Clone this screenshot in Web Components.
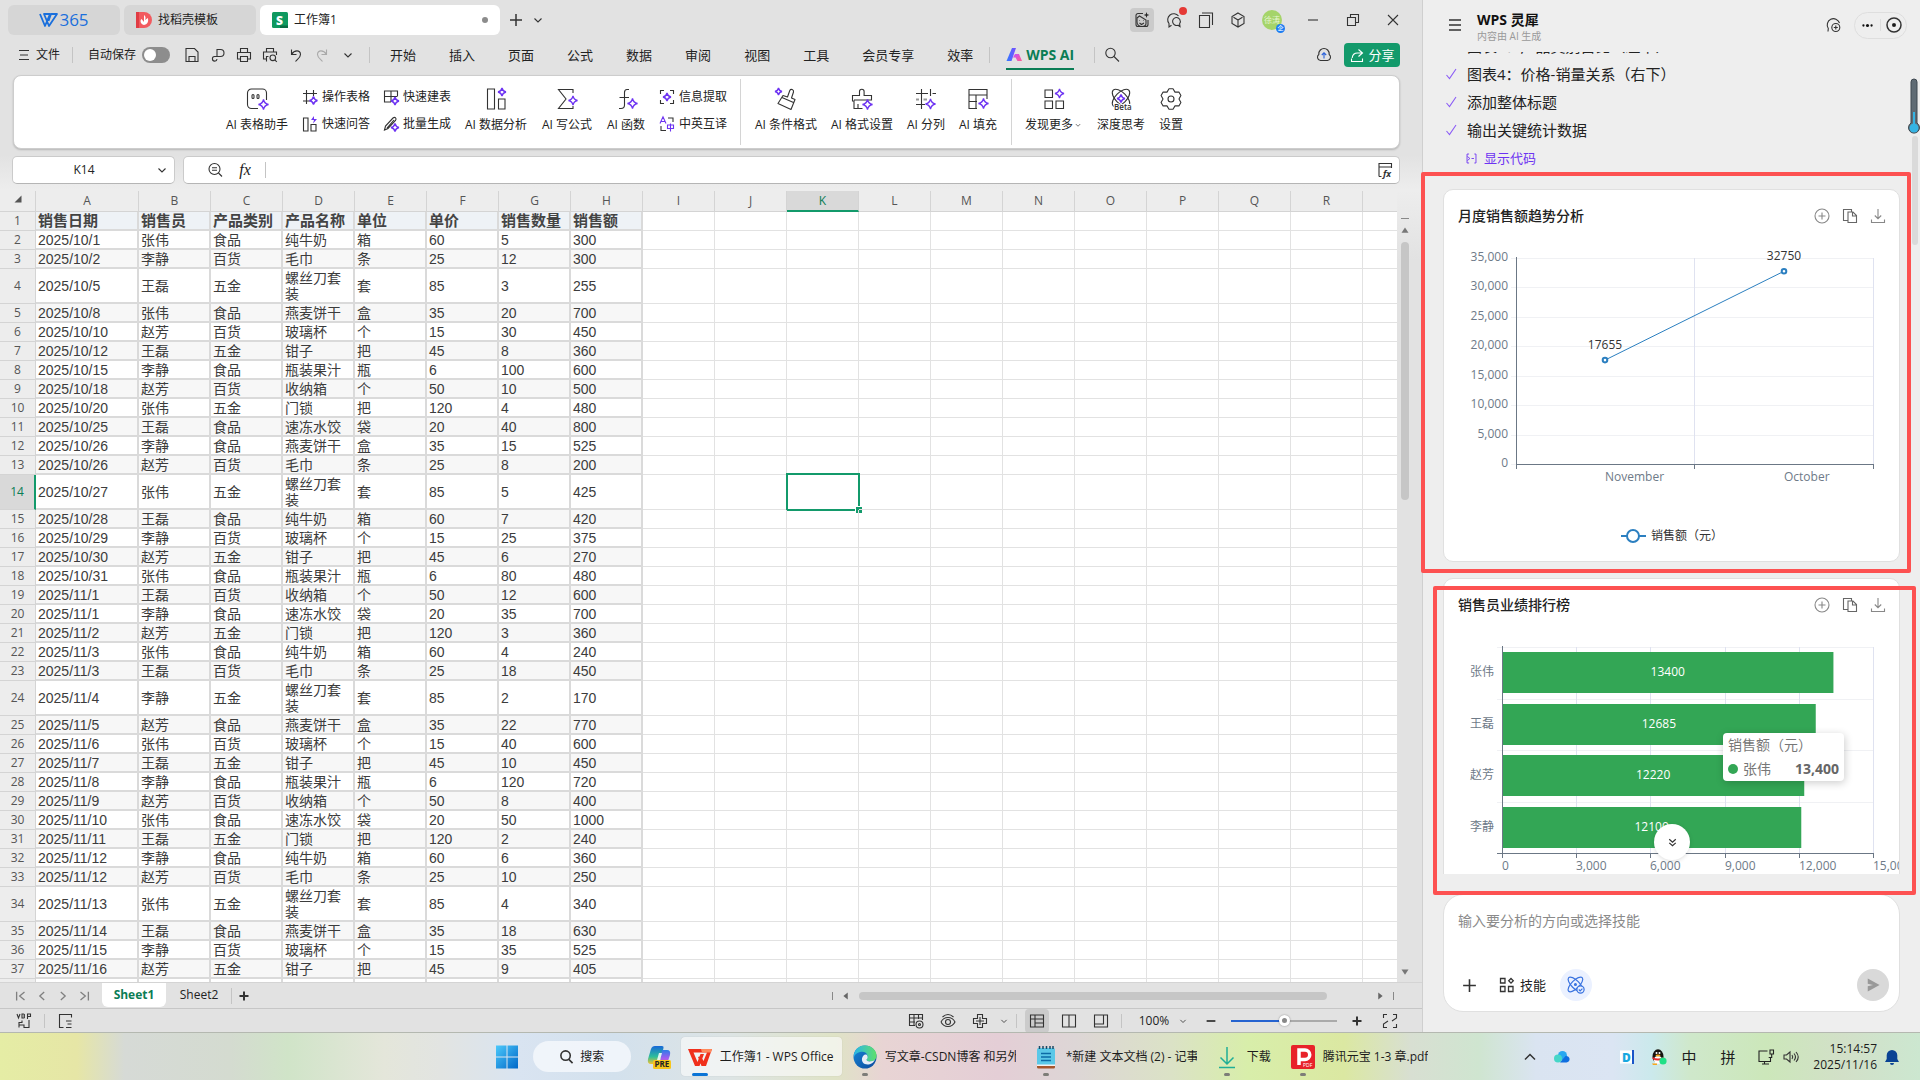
<!DOCTYPE html>
<html lang="zh-CN">
<head>
<meta charset="utf-8">
<title>工作簿1 - WPS Office</title>
<style>
html,body{margin:0;height:100%}
body{font-family:"Open Sans","Noto Sans CJK SC",sans-serif;font-size:12px;line-height:16px;color:#222;overflow:hidden}
</style>
</head>
<body>
<desk-top></desk-top>
<script>
const SPARK = (x, y, r) => `<path d="M${x} ${y - r}Q${x + r * .18} ${y - r * .18} ${x + r} ${y}Q${x + r * .18} ${y + r * .18} ${x} ${y + r}Q${x - r * .18} ${y + r * .18} ${x - r} ${y}Q${x - r * .18} ${y - r * .18} ${x} ${y - r}Z" fill="#fff" stroke="#6d33f2" stroke-width="1.3"/>`;

/* six-toothed outline centred on 12,12 */
const GEAR = Array.from({ length: 6 }, (_, k) => [[-11, 10.5], [11, 10.5], [30, 8]].map(([d, r]) => {
  const a = (k * 60 - 90 + d) * Math.PI / 180;
  return (12 + r * Math.cos(a)).toFixed(1) + ' ' + (12 + r * Math.sin(a)).toFixed(1);
}).join('L')).join('L');

/* name: [viewBox size, markup] */
const ICONS = {
  menu: [16, '<path d="M3 3.500h10M4 8h8M3 12.500h10"/>'],
  menuWide: [16, '<path d="M2 3h12M2 8h12M2 13h12" stroke-width="1.300"/>'],
  chevron: [16, '<path d="M4.500 6.500L8 10l3.500-3.500"/>'],
  chevronUp: [16, '<path d="M3 10.500L8 5.500l5 5" stroke-width="1.500"/>'],
  plus: [16, '<path d="M8 2v12M2 8h12" stroke-width="1.500"/>'],
  plusBold: [16, '<path d="M8 3.500v9M3.500 8h9" stroke-width="2"/>'],
  minusBold: [16, '<path d="M3 8h10" stroke-width="2"/>'],
  save: [16, '<path d="M2 1.500h8.500L14 5v9.500H2zM5 14.500V9.500h6v5"/>'],
  swirl: [16, '<path d="M7 9.500V2.500h3.500a3.500 3.500 0 0 1 0 7H4.500a2.300 2.300 0 1 0 2.500 2.500"/>'],
  print: [16, '<path d="M4.500 5.500V1.500h7v4M4 12H1.500V5.500h13V12H12M4.500 9.500h7v5h-7z"/>'],
  preview: [16, '<path d="M4.500 5V1.500h7V5M4 12H1.500V5h13v3M4.500 14.500v-5h2M14.800 14.800l-2-2"/><circle cx="10.800" cy="10.800" r="2.800"/>'],
  undo: [16, '<path d="M3.500 2.500v5h5M3.800 7.200C6 3 12.500 2.500 12.500 7.500c0 3-3 4.500-5 7"/>'],
  redo: [16, '<path d="M12.500 2.500v5h-5M12.200 7.200C10 3 3.500 2.500 3.500 7.500c0 3 3 4.500 5 7" stroke="#aaa"/>'],
  search: [16, '<circle cx="6.500" cy="6" r="4.700"/><path d="M10 9.500l5 5"/>'],
  zoomOut: [16, '<circle cx="7.500" cy="7" r="5.500"/><path d="M5 5.800h5M5 8.300h5M11.500 11l3.500 3.500"/>'],
  cloudUp: [16, '<path d="M4.500 13.500C1 13 .7 9 2.800 7.500 2.500 3.500 5.500 1.500 8 1.500s5.500 2 5.200 6c2.100 1.500 1.800 5.500-1.700 6z"/><path d="M8 11.500V6M5.800 8L8 5.800 10.200 8" stroke="#2b62d9"/>'],
  share: [16, '<path d="M9.500 2.500L13.500 6l-4 3.500M13 6H8.500C5 6 3.500 8 3.200 11M2.500 11.500v3h11v-3" stroke="#fff"/>'],
  xiu: [16, '<path d="M9 1.500H4a2 2 0 0 0-2 2v9a2 2 0 0 0 2 2h8a2 2 0 0 0 2-2V8"/><path d="M3 6l2.500-2L12 8v3.500c0 2-1.500 3-4 3S3 13 3 10zM5.500 11l2 1.500L10 11M5.500 8.500h.5M9.500 8.500h.5"/><path d="M12.500 0l.7 2.200 2.200.8-2.200.8-.7 2.200-.7-2.200L9.600 3l2.200-.8z" fill="#222" stroke="none"/>'],
  chat: [18, '<path d="M6.500 14.200L4 16v-3.500A6 6 0 1 1 13.500 5"/><path d="M11 6.500a4 4 0 1 0 2 7.700l2 1.300-.4-2.700A4 4 0 0 0 11 6.500z"/>'],
  copyTab: [16, '<path d="M1.500 3.500h10v12h-10zM4 1h10.500v12"/>'],
  cube: [16, '<path d="M8 1l6 3.500v7L8 15l-6-3.500v-7zM8 8v6.500M8 8L3.500 5.200M8 8l4.500-2.800"/>'],
  min: [16, '<path d="M3 8h10"/>'],
  restore: [16, '<path d="M2.500 5.500h8v8h-8zM5.500 5.500v-3h8v8h-3"/>'],
  close: [16, '<path d="M3 3l10 10M13 3L3 13"/>'],
  fxPanel: [16, '<path d="M2 14.500V1.500h12.500V6M2 5h12.500M2 14.500h2.500"/><text x="6" y="14.500" font-size="9" font-style="italic" font-weight="700" fill="#333" stroke="none">fx</text>'],
  robot: [24, '<path d="M13 21.500H6.500a4 4 0 0 1-4-4V6a4 4 0 0 1 4-4h11a4 4 0 0 1 4 4v7"/><rect x="7" y="7.500" width="2" height="4" rx="1"/><rect x="12" y="7.500" width="2" height="4" rx="1"/>' + SPARK(18.5, 17.5, 5)],
  gridOp: [16, '<path d="M4.500 1v14M11.500 1v6M1 4.500h14M1 12h7"/>' + SPARK(11.5, 11.5, 4)],
  bolt: [16, '<path d="M1.500 2h4.500v13H1.500zM9 8.500h5v6.500H9z"/><path d="M12 0L9 4h3l-1 3.500 4-4.500h-3z" fill="#6d33f2" stroke="none"/>'],
  tableNew: [16, '<path d="M8 13H1.500V2h13v5M1.500 7.500h13M8 2v11"/>' + SPARK(12, 12, 4)],
  pen: [16, '<path d="M1.500 14l1-4L10 2c2-1.500 4 .5 2.500 2.500l-7.500 8zM4 12l7-8"/>' + SPARK(12, 11.500, 4)],
  chart: [24, '<path d="M3.500 2h7v20h-7zM14.500 12h6.500v10h-6.500z"/>' + SPARK(18, 5, 4)],
  sigma: [24, '<path d="M18 6V2.500H3.500L11 12l-7.500 9.500H18V19"/>' + SPARK(18, 13.500, 4.5)],
  func: [24, '<path d="M15 2.500h-2q-2.500 0-2.500 3v12.500q0 3.500-3.500 3.500H5M5.500 10.500H15"/>' + SPARK(18.500, 16.500, 5)],
  extract: [16, '<path d="M1.500 5V1.500H5M11 1.500h3.500V5M14.500 11v3.500H11M5 14.500H1.500V11"/>' + SPARK(8, 8, 4)],
  translate: [16, '<path d="M9 2h5v4M2 10v4.500h5"/><g stroke="#6d33f2"><path d="M1 7.500L4 .8l3 6.700M2.200 5.500h3.600M8.500 9h6v3.500h-6zM11.500 7.500V15.500"/></g>'],
  brush: [24, '<path d="M9 8.500l4.500 1.500 2.300-6.500c1-2 4.200-1 3.700 1.500L17.500 11l3.500 1.500-4 10-13-6z M8 10.500l11.500 5" stroke-linejoin="round"/>' + SPARK(4.500, 4.500, 3.500)],
  format: [24, '<path d="M12.500 21.500H4v-7.500H2.500V8.500h7v-4a2.300 2.300 0 0 1 4.600 0v4H21.500V13H4M8 17v4"/>' + SPARK(17.500, 17.500, 5)],
  split: [24, '<path d="M7.500 2v20M16.500 2v7M2 6.500h12M18.500 6.500H22M2 17.500h9"/><path d="M2 12.500h3M9.500 12.500H13" stroke="#999" stroke-width="1.800"/>' + SPARK(16.500, 17, 5)],
  fill: [24, '<path d="M11 21.500H3V2.500h18V12M3 8h18M3 14.500h8M10 8v13.500"/>' + SPARK(17.500, 16.500, 5)],
  more: [24, '<path d="M3 3h7.500v7.500H3zM3 14h7.500v7.500H3zM14 14h7.500v7.500H14z"/>' + SPARK(17.500, 6.500, 4.5)],
  atom: [24, '<ellipse cx="12" cy="11" rx="5.500" ry="11" transform="rotate(45 12 11)"/><ellipse cx="12" cy="11" rx="5.500" ry="11" transform="rotate(-45 12 11)"/>' + SPARK(12, 11.500, 4) + '<text x="5" y="22.500" font-size="8" font-weight="600" fill="#333" stroke="#fff" stroke-width="2" paint-order="stroke">Beta</text>'],
  gear: [24, `<path d="M${GEAR}Z" stroke-linejoin="round"/><circle cx="12" cy="12" r="3"/>`],
  first: [16, '<path d="M3 3v10M12 3.500L6.500 8l5.500 4.500" stroke="#808080" stroke-width="1.500"/>'],
  prev: [16, '<path d="M10.500 3.500L5.500 8l5 4.500" stroke="#808080" stroke-width="1.500"/>'],
  next: [16, '<path d="M5.500 3.500l5 4.500-5 4.500" stroke="#808080" stroke-width="1.500"/>'],
  last: [16, '<path d="M13 3v10M4 3.500L9.500 8 4 12.500" stroke="#808080" stroke-width="1.500"/>'],
  macro: [16, '<path d="M1 1l1.500 4L4 1M6 1v4h1.500a1 1 0 0 0 0-2 1 1 0 0 0 0-2zM11.500 6V1h3v2.500h-3M3 14.500V9.500h3v-2M3 12h5v2.500h5V7"/>'],
  outline: [16, '<path d="M14.500 4.500V1.500h-12v13h4M9 8h5.500M10.500 11h4M9 14.500h5.500"/>'],
  tableEye: [16, '<path d="M7 12.500H1.500v-11h13V7M1.500 5h13M1.500 9H7M6 1.500v11M10.500 1.500V6"/><circle cx="11.500" cy="11.500" r="3.500"/><circle cx="11.500" cy="11.500" r="1"/>'],
  eye: [16, '<path d="M1 9c3-6 11-6 14 0-3 6-11 6-14 0M2.500 4C6 .8 10 .8 13.500 4"/><circle cx="8" cy="9" r="2.500"/>'],
  cross: [16, '<path d="M5.500 5.500v-4h5v4h4v5h-4v4h-5v-4h-4v-5zM8 4v8M4 8h8"/>'],
  viewGrid: [16, '<path d="M1.500 2h13v12h-13zM1.500 6h13M6 2v12M6 10h8.500"/>'],
  viewBook: [16, '<path d="M1.500 2h13v12h-13zM8 2v12"/>'],
  viewPage: [16, '<path d="M1.500 2h13v12h-13zM1.500 11h9V2"/>'],
  full: [16, '<path d="M1.500 5V1.500H5M14.500 11v3.500H11M11 1.500h3.500V5L10 8M5 14.500H1.500V11L6 8"/>'],
  chatAdd: [16, '<path d="M3 14.500l.3-3A6.300 6.300 0 1 1 14.500 6"/><circle cx="10.800" cy="10.500" r="4"/><path d="M10.800 8.500v4M8.800 10.500h4"/>'],
  dots: [16, '<g fill="#111" stroke="none"><circle cx="3" cy="8" r="1.400"/><circle cx="8" cy="8" r="1.900"/><circle cx="13" cy="8" r="1.400"/></g>'],
  target: [16, '<circle cx="8" cy="8" r="7" stroke-width="1.500"/><circle cx="8" cy="8" r="1.500" fill="#111"/>'],
  check: [16, '<path d="M3.500 9l3 3.500 6.500-9.500" stroke="#8b5cf6"/>'],
  code: [16, '<path d="M5 2.500H2.500v11H5M3 5.500L6 8l-3 2.500M8 8h3M11.500 2.500h2v11h-2" stroke="#6d33f2"/>'],
  addCircle: [16, '<circle cx="8" cy="8" r="7" stroke="#888"/><path d="M8 4.500v7M4.500 8h7" stroke="#888"/>'],
  copy: [16, '<path d="M6 12.500H1.500v-11h8v2.500M6 4h5l3.500 3.500v7H6zM10.500 4v4h4" stroke="#666"/>'],
  download: [16, '<path d="M8 1v9.500M4.800 7.500L8 10.700l3.200-3.200M1.500 11.500v3h13v-3" stroke="#888"/>'],
  dblDown: [16, '<path d="M4 4l4 3.500L12 4M4 8.500L8 12l4-3.500" stroke-width="1.500"/>'],
  skills: [16, '<path d="M1.500 1.500h4.500v4.500H1.500zM1.500 9.500h4.500v5H1.500zM9.500 9.500h4.500v5H9.500zM12 1.500l2.300 2.300L12 6.100 9.700 3.800z" stroke-width="1.300"/>'],
  science: [16, '<g stroke="#3b74e0"><ellipse cx="7.500" cy="7.500" rx="3.500" ry="8.500" transform="rotate(45 7.500 7.500)"/><ellipse cx="7.500" cy="7.500" rx="3.500" ry="8.500" transform="rotate(-45 7.500 7.500)"/><circle cx="7.500" cy="7.500" r=".8" fill="#3b74e0"/><circle cx="12" cy="12" r="3.200" fill="#ebf1ff"/><path d="M10.500 12l1.200 1.200 2-2"/></g>'],
  send: [16, '<path d="M2 .5L15.500 8 2 15.500V9.500L8 8 2 6.500z" fill="#999" stroke="none"/>'],
  winSearch: [16, '<circle cx="7" cy="7" r="5" stroke-width="1.700"/><path d="M10.500 11l4 4" stroke-width="1.700"/>'],
  windows: [24, '<defs><linearGradient id="w" x1="0" y1="0" x2="1" y2="1"><stop stop-color="#4cc9fb"/><stop offset="1" stop-color="#0067c8"/></linearGradient></defs><path fill="url(#w)" stroke="none" d="M1 .5h10.500v11H1zM12.500.5H23v11H12.500zM1 12.500h10.500v11H1zM12.500 12.500H23v11H12.500z"/>'],
  copilot: [24, '<defs><linearGradient id="c1" x1="0" y1="0" x2="0" y2="1"><stop stop-color="#1668d8"/><stop offset=".6" stop-color="#2fbf9a"/><stop offset="1" stop-color="#f2c230"/></linearGradient><linearGradient id="c2" x1="0" y1="0" x2="0" y2="1"><stop stop-color="#2a7de8"/><stop offset=".5" stop-color="#a55cf0"/><stop offset="1" stop-color="#f26a7a"/></linearGradient></defs><g stroke="none"><path fill="url(#c1)" d="M8 1h7q2 0 1.500 2L13 16q-1 3-4 3H4q-4 0-3-5L4 4q1-3 4-3z"/><path fill="url(#c2)" d="M15 5h5q4 0 3 5l-3 9q-1 3-4 3H9q3-1 4-5z"/><path fill="#fff" opacity=".85" d="M12 8h3l-2 7h-3z"/><rect x="6" y="15" width="18" height="9" rx="1.500" fill="#f7c61c"/><text x="7.500" y="22.300" font-size="8" font-weight="700" fill="#222">PRE</text></g>'],
  wps: [24, '<path fill="#f0301c" stroke="none" d="M0 4h24l-6 17h-4.500L10 12l3-1 2.500 5L19 7.500H5.500l4 9.500 3-8h3.500L11.500 21H7z"/><path fill="#ff8a5c" stroke="none" d="M13 4h11l-1 3.500h-9z"/>'],
  edge: [24, '<defs><linearGradient id="e" x1="0" y1="0" x2="1" y2="1"><stop stop-color="#1787d8"/><stop offset="1" stop-color="#0c4a9c"/></linearGradient><linearGradient id="e2" x1="0" y1="0" x2="1" y2="0"><stop stop-color="#2bb6e8"/><stop offset="1" stop-color="#5fe06a"/></linearGradient></defs><g stroke="none"><circle cx="12" cy="12" r="11.500" fill="url(#e)"/><path fill="url(#e2)" d="M1 9C3 2 8 .5 12 .5c7 0 11.500 5 11.500 10 0 4-3 6-6 6s-4-1-4-2 1.500-2 1-4C14 7 10 6 7 7S2 9 1 12z"/><path d="M14 10q1.500 2.500-.5 4.500c0 2 3 2.500 6 1.500 1-.3 2-.8 2.500-1.500-1 3-4.500 5-7.500 5-4 0-6-3-5.500-6S12 8.500 14 10z" fill="#e7eef7"/></g>'],
  notepad: [24, '<g stroke="none"><rect x="3" y="3" width="18" height="20" rx="1.500" fill="#5bc8e8"/><path d="M3 20h18v2a1.500 1.500 0 0 1-1.500 1.500h-15A1.500 1.500 0 0 1 3 22z" fill="#a8562c"/><path d="M3 19.500h18v1.500H3z" fill="#f2f2f2"/></g><path d="M7 8.500h10M7 12h10M7 15.500h10" stroke="#0c6ba6" stroke-width="1.600"/><path d="M5.500 1v3M9 1v3M12.500 1v3M16 1v3M19 1v3" stroke="#1b4965" stroke-width="1.500"/>'],
  down: [24, '<path d="M12 2v17M5.500 12.500L12 19l6.500-6.500M4 22.500h16" stroke="#1fae96" stroke-width="1.500"/>'],
  pdf: [24, '<rect width="24" height="24" rx="2" fill="#e8222a" stroke="none"/><path d="M8 20V5h6a4 4 0 0 1 0 9.500H8" stroke="#fff" stroke-width="3.500"/><text x="12" y="21.500" font-size="5" fill="#fff" stroke="none">PDF</text>'],
  onedrive: [16, '<g stroke="none"><circle cx="8.500" cy="6.500" r="4.500" fill="#28a8f0"/><circle cx="4" cy="9.500" r="4" fill="#46d6c8"/><path d="M6 13.500h6.500a3.300 3.300 0 1 0-1-6.500z" fill="#0f6ee0"/></g>'],
  dict: [16, '<g stroke="none"><rect x="1" y="1.500" width="12" height="13" fill="#fff"/><rect x="13" y="1" width="2" height="14" fill="#1a55c8"/><text x="3" y="12.500" font-size="12" font-weight="800" fill="#18a8e0">D</text></g>'],
  penguin: [16, '<g stroke="none"><ellipse cx="7" cy="7.500" rx="5.500" ry="7.200" fill="#15120f"/><ellipse cx="7" cy="11" rx="4" ry="4" fill="#fff"/><path d="M1.500 8q5.500 3 11 0v2q-5.500 3-11 0z" fill="#e8282c"/><ellipse cx="7" cy="6.500" rx="2.500" ry="1" fill="#f7a71c"/><circle cx="5.500" cy="4" r="1" fill="#fff"/><circle cx="8.500" cy="4" r="1" fill="#fff"/><circle cx="12" cy="12" r="3.600" fill="#1fe086"/><path d="M1 14.500h5v1.500H2z" fill="#f7a71c"/></g>'],
  monitor: [16, '<path d="M9.500 2H1v10.500h11.500V8M4 15h7M6.500 12.500V15M12 1h3.500v4H12zM13.700 5v3.500h-3" stroke="#222"/>'],
  speaker: [16, '<path d="M1 6h2.500L7 3v10L3.500 10H1zM9 6q1.500 2 0 4M11 4.500q3 3.500 0 7M13 3q4.500 5 0 10"/>'],
  bell: [16, '<path d="M8 1a5.300 5.300 0 0 1 5.300 5.300V10l1.700 3H1l1.700-3V6.300A5.300 5.300 0 0 1 8 1zM6 14h4a2 2 0 0 1-4 0z" fill="#0a4394" stroke="none"/>'],
  ai: [16, '<defs><linearGradient id="a" x1="0" y1="0" x2="1" y2="0"><stop stop-color="#2f7bff"/><stop offset="1" stop-color="#7a4dff"/></linearGradient><linearGradient id="b" x1="0" y1="0" x2="1" y2="1"><stop stop-color="#c44dff"/><stop offset="1" stop-color="#ff5f8f"/></linearGradient></defs><path fill="url(#a)" stroke="none" d="M6 1h4L5.500 14H.500z"/><path fill="url(#b)" stroke="none" d="M9 7h4l3 7h-4.500L9.500 10.500H7z"/>'],
  docer: [16, '<path d="M0 0h8a8 8 0 0 1 0 16H0z" fill="#f25a5f" stroke="none"/><path d="M0 0h3v16H0z" fill="#e03c44" stroke="none"/><path d="M8 13C4 12 4 8 5.500 7L8 10V3q2.500 2 1 5l3-2q1 6-4 7z" fill="#fff" stroke="none"/>'],
  sheet: [16, '<rect width="16" height="16" rx="1.500" fill="#0f9960" stroke="none"/><path d="M8 16v-2.500h8V16z" fill="#0a6b42" stroke="none"/><text x="4" y="12.500" font-size="12" font-weight="800" fill="#fff" stroke="none">S</text>'],
  wlogo: [20, '<path d="M1 4l5 12L11 4H5l5 12L18 4H12l-2.500 7" stroke="#1a6fdc" stroke-width="1.800" stroke-linejoin="round"/>'],
  corner: [16, '<path d="M12 4v8H4z" fill="#555" stroke="none"/>'],
  triUp: [16, '<path d="M8 5l4 6H4z" fill="#777" stroke="none"/>'],
  triDown: [16, '<path d="M8 11l4-6H4z" fill="#777" stroke="none"/>'],
  triLeft: [16, '<path d="M5 8l5-4v8z" fill="#666" stroke="none"/>'],
  triRight: [16, '<path d="M11 8L6 4v8z" fill="#666" stroke="none"/>']
};

const BASE = `*{box-sizing:border-box}
button,input{font:inherit;color:inherit;border:0;background:none;padding:0;margin:0}
button{display:inline-flex;align-items:center;justify-content:center;white-space:nowrap;flex:none}
input:focus{outline:none}
.rule{flex:none;width:1px;background:#c4c4c4}`;

function define(name, css, html, setup) {
  const tpl = document.createElement('template');
  tpl.innerHTML = `<style>${BASE}${css}</style>${typeof html === 'string' ? html : ''}`;
  customElements.define(name, class extends HTMLElement {
    connectedCallback() {
      if (this.shadowRoot) return;
      const root = this.attachShadow({ mode: 'open' });
      root.append(tpl.content.cloneNode(true));
      if (typeof html === 'function') root.innerHTML += html(this);
      if (setup) setup(this, root);
    }
  });
}
const icon = (n, s = 16, cls = '') => `<ui-icon class="${cls}" name="${n}" size="${s}"></ui-icon>`;
const btn = (n, label, cls = '', s = 16) => `<button class="${cls}" aria-label="${label}">${icon(n, s)}</button>`;

define('ui-icon', `:host{display:inline-flex;flex:none}svg{display:block;overflow:visible;fill:none;stroke:#333;stroke-width:1.1;font-family:"Open Sans",sans-serif}`,
  el => { const [box, art] = ICONS[el.getAttribute('name')], s = el.getAttribute('size');
    return `<svg viewBox="0 0 ${box} ${box}" width="${s}" height="${s}" aria-hidden="true">${art}</svg>`; });

define('title-bar', `:host{display:flex;align-items:center;height:40px;padding:0 9px 8px 8px;gap:4px}
.tab{height:30px;margin-top:8px;border-radius:6px;background:#d6d6d6;justify-content:flex-start;gap:6px;padding:0 12px}
.tab.home{width:112px;justify-content:center;gap:0;color:#1a6fdc;font-size:17px}
.tab.docer{width:132px}.tab.book{width:240px;background:#fff}
.dot{width:6px;height:6px;border-radius:50%;background:#8c8c8c;margin-left:auto}
.new{width:24px;height:30px;margin-top:8px}.drop{width:12px;height:30px;margin-top:8px}
.sys{display:flex;margin-left:auto;margin-top:8px;align-items:center}
.sys button{width:32px;height:24px;position:relative}.sys .win{width:40px}.sys .me{margin:0 5px 0 2px}
.sys .on ui-icon{background:#cbcbcb;border-radius:4px;padding:4px}
.red{position:absolute;top:-1px;right:3px;width:8px;height:8px;border-radius:50%;background:#e53935}
.face{width:20px;height:20px;border-radius:50%;background:#a5d46a;color:#e9f6d5;font-size:8px;line-height:20px}
.co{position:absolute;right:3px;bottom:-1px;width:9px;height:9px;border-radius:50%;background:#1b7cf2;color:#fff;font-size:6px;line-height:9px}`,
`<button class="tab home">${icon('wlogo', 20)}365</button>
<button class="tab docer">${icon('docer')}找稻壳模板</button>
<button class="tab book">${icon('sheet')}工作簿1<span class="dot"></span></button>
${btn('plus', '新建', 'new')}${btn('chevron', '标签列表', 'drop')}
<div class="sys">${btn('xiu', '助手', 'on')}<button aria-label="消息">${icon('chat', 18)}<span class="red"></span></button>${btn('copyTab', '窗口')}${btn('cube', '应用')}
<button class="me" aria-label="账号"><span class="face">徐涛</span><span class="co">企</span></button>${btn('min', '最小化', 'win')}${btn('restore', '还原', 'win')}${btn('close', '关闭', 'win')}</div>`);

define('menu-bar', `:host{display:flex;align-items:center;height:30px;padding:0 22px 0 16px}
.file{gap:4px;margin-right:12px}.rule{height:16px}
.auto{display:flex;align-items:center;gap:6px;margin:0 9px 0 15px}
.auto input{appearance:none;width:28px;height:16px;border-radius:8px;background:#8d8d8d;display:flex;padding:2px}
.auto input::before{content:"";width:12px;height:12px;border-radius:50%;background:#fff}
.q{width:26px;height:24px}.tabs{display:flex;gap:33px;margin:0 16px 0 20px;font-size:13px}
.rule.a{margin-left:8px}
.ai{height:30px;gap:4px;color:#0b7d55;font-weight:700;font-size:14px;margin:0 20px 0 16px;border-bottom:2px solid #0b7d55;border-top:2px solid transparent}
.s{width:34px}.cloud{margin-left:auto;width:40px}
.share{width:56px;height:24px;border-radius:4px;background:#139a6b;color:#fff;gap:3px;font-size:13px}`,
`<button class="file">${icon('menu')}文件</button><i class="rule"></i>
<label class="auto">自动保存<input type="checkbox"></label>
${btn('save', '保存', 'q')}${btn('swirl', '输出', 'q')}${btn('print', '打印', 'q')}${btn('preview', '预览', 'q')}${btn('undo', '撤销', 'q')}${btn('redo', '恢复', 'q')}${btn('chevron', '更多', 'q')}
<i class="rule a"></i><nav class="tabs">${['开始','插入','页面','公式','数据','审阅','视图','工具','会员专享','效率'].map(t => `<button>${t}</button>`).join('')}</nav>
<i class="rule"></i><button class="ai">${icon('ai')}WPS AI</button><i class="rule"></i>${btn('search', '搜索', 's')}
${btn('cloudUp', '云同步', 'cloud')}<button class="share">${icon('share')}分享</button>`);

define('ribbon-button', `:host{display:flex}:host([wide]){width:64px}:host([mid]){width:52px}:host([small]){width:40px}
button{width:100%;flex-direction:column;gap:6px}:host([row]) button{flex-direction:row;gap:4px;height:16px}.l{display:flex;align-items:center}`,
  el => `<button>${icon(el.getAttribute('icon'), el.hasAttribute('row') ? 16 : 24)}<span class="l"><slot></slot></span></button>`);

define('ai-ribbon', `:host{display:flex;height:74px;margin:5px 22px 0 13px;padding:0 211px;background:#fff;border:1px solid #cdcdcd;border-radius:8px;box-shadow:0 1px 2px #0003;align-items:center}
:host>*{flex:none}.g{display:flex;gap:12px;align-items:center;padding-bottom:4px}.g.first{gap:13px}.c{display:flex;flex-direction:column;gap:11px}
.rule{height:66px;margin:0 13px;background:#d4d4d4}`,
`<div class="g first"><ribbon-button wide icon="robot">AI 表格助手</ribbon-button>
<div class="c"><ribbon-button row icon="gridOp">操作表格</ribbon-button><ribbon-button row icon="bolt">快速问答</ribbon-button></div>
<div class="c"><ribbon-button row icon="tableNew">快速建表</ribbon-button><ribbon-button row icon="pen">批量生成</ribbon-button></div>
<ribbon-button wide icon="chart">AI 数据分析</ribbon-button><ribbon-button mid icon="sigma">AI 写公式</ribbon-button><ribbon-button small icon="func">AI 函数</ribbon-button>
<div class="c"><ribbon-button row icon="extract">信息提取</ribbon-button><ribbon-button row icon="translate">中英互译</ribbon-button></div></div>
<i class="rule"></i><div class="g"><ribbon-button wide icon="brush">AI 条件格式</ribbon-button><ribbon-button wide icon="format">AI 格式设置</ribbon-button><ribbon-button small icon="split">AI 分列</ribbon-button><ribbon-button small icon="fill">AI 填充</ribbon-button></div>
<i class="rule"></i><div class="g"><ribbon-button icon="more">发现更多${icon('chevron', 10)}</ribbon-button><ribbon-button mid icon="atom">深度思考</ribbon-button><ribbon-button icon="gear">设置</ribbon-button></div>`);

define('formula-bar', `:host{display:flex;gap:8px;height:28px;margin:7px 22px 7px 12px}
div{display:flex;align-items:center;background:#fff;border:1px solid #cbcbcb;border-bottom-color:#b5b5b5;border-radius:5px}
.name{width:163px}.name input{flex:1;min-width:0;text-align:center;padding-left:5px}.name button{width:24px}
.fx{flex:1;padding:0 4px 0 16px}.fx button{width:30px}.fx i.f{font:italic 16px "Liberation Serif",serif;color:#222}.fx .rule{height:16px;margin-left:5px}.fx input{flex:1;padding-left:6px}
.fx button:last-child{width:20px}`,
`<div class="name"><input aria-label="名称框" value="K14">${btn('chevron', '名称列表')}</div>
<div class="fx">${btn('zoomOut', '缩小')}<button aria-label="插入函数"><i class="f">fx</i></button><i class="rule"></i><input aria-label="编辑栏">${btn('fxPanel', '函数面板')}</div>`);

const PEOPLE = { z: '张伟', l: '李静', w: '王磊', x: '赵芳' };
const GOODS = { 纯牛奶: ['食品', '箱', 60], 毛巾: ['百货', '条', 25], 螺丝刀套装: ['五金', '套', 85], 燕麦饼干: ['食品', '盒', 35], 玻璃杯: ['百货', '个', 15], 钳子: ['五金', '把', 45], 瓶装果汁: ['食品', '瓶', 6], 收纳箱: ['百货', '个', 50], 门锁: ['五金', '把', 120], 速冻水饺: ['食品', '袋', 20] };
const SALES = `10/1 z 纯牛奶 5|10/2 l 毛巾 12|10/5 w 螺丝刀套装 3|10/8 z 燕麦饼干 20|10/10 x 玻璃杯 30|10/12 w 钳子 8|10/15 l 瓶装果汁 100|10/18 x 收纳箱 10|10/20 z 门锁 4|10/25 w 速冻水饺 40|10/26 l 燕麦饼干 15|10/26 x 毛巾 8|10/27 z 螺丝刀套装 5|10/28 w 纯牛奶 7|10/29 l 玻璃杯 25|10/30 x 钳子 6|10/31 z 瓶装果汁 80|11/1 w 收纳箱 12|11/1 l 速冻水饺 35|11/2 x 门锁 3|11/3 z 纯牛奶 4|11/3 w 毛巾 18|11/4 l 螺丝刀套装 2|11/5 x 燕麦饼干 22|11/6 z 玻璃杯 40|11/7 w 钳子 10|11/8 l 瓶装果汁 120|11/9 x 收纳箱 8|11/10 z 速冻水饺 50|11/11 w 门锁 2|11/12 l 纯牛奶 6|11/12 x 毛巾 10|11/13 z 螺丝刀套装 4|11/14 w 燕麦饼干 18|11/15 l 玻璃杯 35|11/16 x 钳子 9`
  .split('|').map(s => { const [d, p, g, n] = s.split(' '), [cat, unit, price] = GOODS[g]; return ['2025/' + d, PEOPLE[p], cat, g, unit, price, n, price * n]; });

define('sheet-grid', `:host{display:flex;flex:1;min-height:0;overflow:hidden}
.view{flex:1;min-width:0;overflow:hidden;background:#fff}
table{border-collapse:separate;border-spacing:0;table-layout:fixed}
th,td{padding:0;height:19px;border-right:1px solid #e2e2e2;border-bottom:1px solid #e2e2e2;font-weight:400;text-align:left}
thead th{height:21px;background:#ededed;text-align:center;color:#555;border-color:#d4d4d4;font-size:12px;line-height:16px}
tbody th{background:#ededed;text-align:center;color:#555;border-color:#d4d4d4;font-size:12px;line-height:14px}
td{position:relative;font:14px/16px "Liberation Sans","Noto Sans CJK SC",sans-serif;color:#3c3c3c;overflow:hidden}
td.d{border-right:2px solid #dadada;border-bottom:2px solid #dadada;padding-left:2px}
td div{line-height:16px;padding-top:1px;height:17px}
tr.t>*{height:35px}tr.t td div{height:auto}tr.alt td.d{background:#f7f7f7}tr.h td.d{background:#eef2f6;font-weight:700;font-size:15px;color:#444;white-space:nowrap}
thead th.on{background:#d9d9d9;color:#0b7d55;border-bottom:2px solid #139a6b}
tbody th.on{background:#d9d9d9;color:#0b7d55;border-right:2px solid #139a6b}
td.cur{overflow:visible}td.cur::before{content:"";position:absolute;inset:-2px -2px -2px -1px;border:2px solid #139a6b}
td.cur::after{content:"";position:absolute;right:-4px;bottom:-4px;width:6px;height:6px;background:#139a6b;border:1px solid #fff;border-width:1px 0 0 1px}
.bar{flex:none;width:16px;margin-right:9px;display:flex;flex-direction:column;align-items:center;padding-top:27px}
.dash{width:8px;height:1px;background:#888}.thumb{width:8px;height:258px;border-radius:4px;background:#c6c6c6;margin-top:5px}
.bar .up{margin-top:4px}.bar .dn{margin-top:auto;margin-bottom:3px}`,
`<div class="view"><table><colgroup></colgroup><thead></thead><tbody></tbody></table></div>
<div class="bar"><i class="dash"></i>${icon('triUp', 14, 'up')}<i class="thumb"></i>${icon('triDown', 14, 'dn')}</div>`,
(el, root) => {
  const cols = [...'ABCDEFGHIJKLMNOPQRS'];
  root.querySelector('colgroup').innerHTML = '<col style="width:36px"><col style="width:103px">' + '<col style="width:72px">'.repeat(cols.length - 1);
  root.querySelector('table').style.width = 36 + 103 + 72 * (cols.length - 1) + 'px';
  root.querySelector('thead').innerHTML = `<tr><th>${icon('corner', 14)}</th>${cols.map(c => `<th class="${c === 'K' ? 'on' : ''}">${c === 'S' ? '' : c}</th>`).join('')}</tr>`;
  const rows = [['销售日期', '销售员', '产品类别', '产品名称', '单位', '单价', '销售数量', '销售额'], ...SALES, Array(8).fill('')];
  root.querySelector('tbody').innerHTML = rows.map((r, i) => {
    const n = i + 1, cls = n === 1 ? 'h' : r[3] === '螺丝刀套装' ? 't' : n % 2 ? 'alt' : '';
    return `<tr class="${cls}"><th class="${n === 14 ? 'on' : ''}">${n > 37 ? '' : n}</th>${cols.map((c, j) => j < 8 ? `<td class="d"><div>${r[j]}</div></td>` : `<td class="${c === 'K' && n === 14 ? 'cur' : ''}"></td>`).join('')}</tr>`;
  }).join('');
});

define('sheet-tabs', `:host{display:flex;height:26px;align-items:center;padding:0 28px 0 10px;border-top:1px solid #d4d4d4}
.n{width:21px}.t{height:24px;align-self:flex-start;width:64px;margin-left:8px}.on{background:#fff;border-radius:0 0 6px 6px;color:#0b7d55;font-weight:700}
.t+.t{margin-left:1px}.rule{height:16px}.add{width:24px}
.h{margin-left:auto;display:flex;align-items:center;gap:6px;flex:0 1 562px}.track{flex:1;height:8px;margin-right:40px}.thumb{width:100%;height:8px;border-radius:4px;background:#c6c6c6}
.e{width:1px;height:8px;background:#888}`,
`${btn('first', '首个', 'n', 14)}${btn('prev', '上一个', 'n', 14)}${btn('next', '下一个', 'n', 14)}${btn('last', '末个', 'n', 14)}
<button class="t on">Sheet1</button><button class="t">Sheet2</button><i class="rule"></i>${btn('plusBold', '新建工作表', 'add')}
<div class="h"><i class="e"></i>${icon('triLeft', 14)}<div class="track"><div class="thumb"></div></div>${icon('triRight', 14)}<i class="e"></i></div>`);

define('status-bar', `:host{display:flex;height:24px;align-items:center;padding:0 12px 0 4px;border-top:1px solid #c6c6c6}
button{width:32px;height:24px}.left{width:40px}.rule{height:14px}.r{display:flex;align-items:center;margin-left:auto}
.on{width:24px;margin:0 4px;background:#cbcbcb;border-radius:4px}.c{width:16px}.r .rule{margin:0 4px}
.z{width:56px;gap:8px;margin:0 6px 0 10px}.s{width:26px}
input{appearance:none;width:106px;height:12px;margin:0 7px;background:linear-gradient(#2563d0,#2563d0) 0 50%/50% 2px no-repeat,linear-gradient(#aaa,#aaa) 0 50%/100% 2px no-repeat}
input::-webkit-slider-thumb{appearance:none;width:11px;height:11px;border-radius:50%;background:#888;border:3px solid #fff;box-shadow:0 0 2px #0006}
.f{width:40px}`,
`${btn('macro', '宏', 'left')}<i class="rule"></i>${btn('outline', '大纲', 'left')}
<div class="r">${btn('tableEye', '护眼')}${btn('eye', '阅读')}${btn('cross', '定位')}${btn('chevron', '更多', 'c', 12)}<i class="rule"></i>${btn('viewGrid', '普通视图', 'on')}${btn('viewBook', '分页')}${btn('viewPage', '页面布局')}<i class="rule"></i>
<button class="z">100%${icon('chevron', 12)}</button>${btn('minusBold', '缩小', 's', 14)}<input type="range" aria-label="缩放" min="0" max="100" value="50">${btn('plusBold', '放大', 's', 16)}${btn('full', '全屏', 'f')}</div>`);

define('sheet-app', `:host{display:flex;flex-direction:column;flex:1;min-width:0;background:linear-gradient(#e2e2e2 0,#e2e2e2 155px,#ededed 190px,#e2e2e2 260px)}`,
`<title-bar></title-bar><menu-bar></menu-bar><ai-ribbon></ai-ribbon><formula-bar></formula-bar><sheet-grid></sheet-grid><sheet-tabs></sheet-tabs><status-bar></status-bar>`);

define('chart-card', `:host{display:block;flex:none;background:#fff;border:1px solid #e0e0e0;border-radius:10px;margin-bottom:16px}
header{display:flex;align-items:center;height:50px;padding:2px 13px 0 14px}h3{margin:0 auto 0 0;font-size:14px;line-height:20px;font-weight:500;color:#222}
button{width:16px;height:16px;margin-left:12px}`,
  el => `<header><h3>${el.getAttribute('heading')}</h3>${btn('addCircle', '添加')}${btn('copy', '复制')}${btn('download', '下载')}</header><slot></slot>`);

const CHART = `:host{display:block}svg{display:block;width:100%;height:321px;font-size:12px;fill:#6e7a88}.g{stroke:#f0f1f4}.v{stroke:#dfe2f0}.a{stroke:#6b7785}.k{fill:#333}.m{text-anchor:middle}.e{text-anchor:end}line{shape-rendering:crispEdges}`;
const line = (c, x1, y1, x2, y2) => `<line class="${c}" x1="${x1}" y1="${y1}" x2="${x2}" y2="${y2}"/>`;
const text = (c, x, y, s) => `<text class="${c}" x="${x}" y="${y}">${s}</text>`;

define('line-chart', CHART, () => {
  const y = v => 224 - 206 * v / 35000; let s = '';
  for (let v = 0; v <= 35000; v += 5000) s += line('g', 67, Math.round(y(v)), 429, Math.round(y(v))) + text('e', 64, Math.round(y(v)) + 3, v.toLocaleString('en-US'));
  s += line('v', 250, 18, 250, 224) + line('v', 429, 18, 429, 224) + line('a', 72, 17, 72, 229) + line('a', 72, 224, 429, 224) + line('a', 250, 224, 250, 229) + line('a', 429, 224, 429, 229);
  s += `<path d="M161 ${y(17655)}L340 ${y(32750)}" stroke="#2b7fc0"/>`;
  for (const [x, v] of [[161, 17655], [340, 32750]]) s += `<circle cx="${x}" cy="${y(v)}" r="2.300" fill="#fff" stroke="#2b7fc0" stroke-width="2"/>` + text('k m', x, Math.round(y(v)) - 11, v);
  s += text('', 161, 241, 'November') + text('', 340, 241, 'October');
  s += `<path d="M177 296h25" stroke="#2b7fc0" stroke-width="2"/><circle cx="189" cy="296" r="6" fill="#fff" stroke="#2b7fc0" stroke-width="2"/>` + text('k', 207, 300, '销售额（元）');
  return `<svg viewBox="0 0 455 321" preserveAspectRatio="xMidYMin meet">${s}</svg>`;
});

define('bar-chart', CHART, () => {
  let s = '';
  for (let i = 0; i < 5; i++) s += line('g', 53, Math.round(18 + 51.5 * i), 429, Math.round(18 + 51.5 * i));
  for (let i = 1; i < 6; i++) s += line('v', Math.round(58 + 74.2 * i), 18, Math.round(58 + 74.2 * i), 224);
  [['张伟', 13400], ['王磊', 12685], ['赵芳', 12220], ['李静', 12100]].forEach(([n, v], i) => {
    const w = 371 * v / 15000, t = Math.round(23 + 51.5 * i);
    s += `<rect x="58" y="${t}" width="${w}" height="41" fill="#33a655"/>` + text('e', 50, t + 24, n) + `<text class="m" fill="#fff" x="${58 + w / 2}" y="${t + 24}">${v}</text>`;
  });
  s += line('a', 58, 17, 58, 229) + line('a', 53, 224, 429, 224);
  for (let i = 0; i < 6; i++) s += line('a', Math.round(58 + 74.2 * i), 224, Math.round(58 + 74.2 * i), 229) + text('', Math.round(58 + 74.2 * i), 241, (3000 * i).toLocaleString('en-US'));
  return `<svg viewBox="0 0 455 321" preserveAspectRatio="xMidYMin meet">${s}</svg>`;
});

define('chat-box', `:host{display:flex;flex-direction:column;justify-content:space-between;height:118px;margin:20px;background:#fff;border:1px solid #e0e0e0;border-radius:20px;padding:16px 10px 10px 13px}
textarea{border:0;padding:0 0 0 1px;resize:none;outline:none;height:20px;font:14px/20px "Open Sans","Noto Sans CJK SC",sans-serif;overflow:hidden}textarea::placeholder{color:#8a8a8a;opacity:1}
div{display:flex;align-items:center}button{height:32px}.p{width:24px}.s{margin:0 14px 0 18px;gap:5px;font-size:13px}.r{width:32px;border-radius:50%;background:#ebf1ff}.go{width:32px;border-radius:50%;background:#d9d9d9;margin-left:auto}`,
`<textarea aria-label="提问" placeholder="输入要分析的方向或选择技能"></textarea>
<div>${btn('plus', '添加', 'p', 17)}<button class="s">${icon('skills')}技能</button>${btn('science', '深度思考', 'r', 18)}${btn('send', '发送', 'go', 14)}</div>`);

define('ai-panel', `:host{display:flex;flex-direction:column;flex:none;width:498px;position:relative;background:#eee;border-left:1px solid #cfcfcf}
header{display:flex;align-items:center;height:52px;flex:none;padding:0 13px 2px 20px}
header>button{width:24px;height:24px}.t{margin:2px auto 0 10px}h2{margin:0;font-size:14px;line-height:20px;font-weight:700;color:#111}.t p{margin:0;font-size:10px;line-height:13px;color:#999}
.pill{display:flex;align-items:center;height:27px;border:1px solid #dedede;border-radius:14px;margin-left:9px}.pill button{width:25px}.pill .rule{height:12px;background:#ddd}
.scroll{flex:1;min-height:0;overflow:hidden;padding:0 20px;display:flex;flex-direction:column}
ul{list-style:none;margin:-20px 0 0;padding:0;flex:none}li{display:flex;align-items:center;gap:8px;height:28px;font-size:15px;color:#222;white-space:nowrap}
.code{align-self:flex-start;height:28px;margin:0 0 17px 22px;gap:6px;color:#6d33f2;font-size:13px}
.mark{position:absolute;border:4px solid #fd5151;border-radius:2px;pointer-events:none}.one{inset:172px 9px auto -2px;height:401px}.two{inset:586px 4px auto 10px;height:309px}
.tip{position:absolute;left:300px;top:733px;width:121px;height:48px;background:#fff;border-radius:4px;box-shadow:1px 2px 8px #0003;padding:2px 5px;font-size:14px;line-height:20px;color:#777;white-space:nowrap}
.tip div{display:flex;align-items:center;gap:5px;margin-top:4px}.tip i{width:10px;height:10px;border-radius:50%;background:#33a655}.tip b{margin-left:auto;font-weight:700;color:#666}
.down{position:absolute;left:231px;top:824px;width:36px;height:36px;border-radius:50%;background:#fff;box-shadow:0 1px 4px #0002}
.thumb{position:absolute;right:2px;top:136px;width:6px;height:109px;border-radius:3px;background:#dadada}
.thermo{position:absolute;right:0;top:78px}`,
`<header>${btn('menuWide', '菜单')}<div class="t"><h2>WPS 灵犀</h2><p>内容由 AI 生成</p></div>${btn('chatAdd', '新对话')}<div class="pill">${btn('dots', '更多', '', 13)}<i class="rule"></i>${btn('target', '关闭')}</div></header>
<div class="scroll"><ul>${['图表3：产品类别占比（左下）', '图表4：价格-销量关系（右下）', '添加整体标题', '输出关键统计数据'].map(t => `<li>${icon('check')}${t}</li>`).join('')}</ul>
<button class="code">${icon('code', 13)}显示代码</button>
<chart-card heading="月度销售额趋势分析"><line-chart></line-chart></chart-card><chart-card heading="销售员业绩排行榜"><bar-chart></bar-chart></chart-card></div>
<chat-box></chat-box>
<div class="tip">销售额（元）<div><i></i>张伟<b>13,400</b></div></div>${btn('dblDown', '到底部', 'down', 13)}
<i class="thumb"></i><svg class="thermo" width="12" height="58" aria-hidden="true"><path d="M3 4a3 3 0 0 1 6 0v41a5.500 5.500 0 1 1-6 0z" fill="#5f6b74" stroke="#3e4850"/><circle cx="6" cy="50" r="4.500" fill="#35b4e4"/><path d="M6 34v14" stroke="#35b4e4" stroke-width="2"/></svg>
<i class="mark one"></i><i class="mark two"></i>`);

define('task-item', `:host{display:block}button{position:relative;width:100%;height:39px;gap:8px;padding:0 7px;justify-content:flex-start;border-radius:4px}
:host([active]) button{background:#fbfbfaa8;box-shadow:0 0 1px #0003}span{overflow:hidden;min-width:0}
button::after{content:"";position:absolute;left:16px;bottom:0;width:6px;height:3px;border-radius:2px;background:#7d7d78}:host([active]) button::after{left:11px;width:16px;background:#0a74d6}`,
  el => `<button>${icon(el.getAttribute('icon'), 24)}<span><slot></slot></span></button>`);

define('task-bar', `:host{display:flex;align-items:center;height:48px;flex:none;border-top:1px solid #b4b8b0;color:#1c1c1c;
background:linear-gradient(90deg,#e5eda5 0,#e6e6a6 4%,#d6dad6 6.5%,#d4dbd0 12%,#d0e4c8 15%,#e4e6da 20%,#e2e4e2 23%,#d9e4f1 27%,#d3e1ed 32%,#dde4e4 38%,#dfe3c6 43.500%,#e8d4d4 46%,#e4ced6 52%,#ddd6d6 56%,#dbe2c6 61%,#d8eeaa 65%,#dbe8a2 70%,#d8dfd2 73.500%,#cfe5d0 77%,#dae4f1 80%,#dbe5f3 84%,#cbe9ec 86%,#cfe8cb 88%,#cce7ba 92%,#d2e0c8 96%,#cce7d0 100%)}
.side{flex:1 1 0;display:flex;justify-content:flex-end;align-items:center;min-width:0}.l{padding-left:10px}.mid{display:flex;align-items:center;gap:4px}
.find{width:98px;height:31px;border-radius:16px;background:#f4f7fbdd;gap:6px;margin:0 6px 0 10px}.pilot{width:36px}.w1{width:161px}.w2{width:177px}.w3{width:72px}
.side button{width:32px}.side .gap{margin-right:33px}.side .zh{width:28px;font-size:15px}.side .py{width:50px;font-size:15px}.side .s{width:25px}
.side .clock{width:74px;justify-content:flex-end;text-align:right;line-height:16px}.side .bell{width:30px;margin-right:13px}`,
`<div class="side l"></div><div class="mid"><button aria-label="开始">${icon('windows', 24)}</button><button class="find">${icon('winSearch', 15)}搜索</button><button class="pilot" aria-label="Copilot">${icon('copilot', 24)}</button>
<task-item class="w1" active icon="wps">工作簿1 - WPS Office</task-item><task-item class="w2" icon="edge">写文章-CSDN博客 和另外 1 个页面</task-item><task-item class="w2" icon="notepad">*新建 文本文档 (2) - 记事本</task-item><task-item class="w3" icon="down">下载</task-item><task-item icon="pdf">腾讯元宝 1-3 章.pdf</task-item></div>
<div class="side">${btn('chevronUp', '隐藏的图标')}${btn('onedrive', 'OneDrive', 'gap')}${btn('dict', '词典')}${btn('penguin', 'QQ')}<button class="zh">中</button><button class="py">拼</button>${btn('monitor', '网络', 's')}${btn('speaker', '音量', 's')}<button class="clock"><time>15:14:57<br>2025/11/16</time></button>${btn('bell', '通知', 'bell')}</div>`);

define('desk-top', `:host{display:flex;flex-direction:column;height:100vh}main{display:flex;flex:1;min-height:0}`,
`<main><sheet-app></sheet-app><ai-panel></ai-panel></main><task-bar></task-bar>`);
</script>
</body>
</html>
